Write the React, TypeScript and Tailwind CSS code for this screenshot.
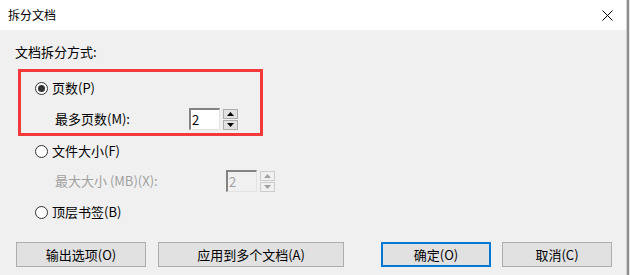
import React from 'react';

const font = { fontFamily: '"Noto Sans CJK SC", "Noto Sans", sans-serif' };

const Radio = ({ checked, label }: { checked?: boolean; label: string }) => (
  <div className="flex items-center h-[16px] gap-[4px]">
    <span className="w-[13px] h-[13px] rounded-full border border-[#333333] bg-white flex items-center justify-center">
      {checked && <span className="w-[7px] h-[7px] rounded-full bg-[#333333]" />}
    </span>
    <span className="leading-[16px]">{label}</span>
  </div>
);

const Spinner = ({ disabled }: { disabled?: boolean }) => {
  const arrow = disabled ? '#a0a0a0' : '#000000';
  const btn = disabled
    ? 'border-[#cccccc] bg-[#f0f0f0]'
    : 'border-[#adadad] bg-[#e1e1e1]';
  return (
    <div className="flex items-center gap-[3px]">
      <div
        className={`w-[31px] h-[22px] border-t-2 border-l-2 border-r border-b border-t-[#838383] border-l-[#838383] border-r-[#e3e3e3] border-b-[#e3e3e3] flex items-center pl-[1px] leading-none ${
          disabled ? 'bg-[#f0f0f0] text-[#a0a0a0]' : 'bg-white text-black'
        }`}
      >
        2
      </div>
      <div className="flex flex-col gap-[1px]">
        <div className={`w-[15px] h-[10px] border flex items-center justify-center ${btn}`}>
          <svg width="7" height="4" viewBox="0 0 7 4">
            <polygon points="3.5,0 7,4 0,4" fill={arrow} />
          </svg>
        </div>
        <div className={`w-[15px] h-[10px] border flex items-center justify-center ${btn}`}>
          <svg width="7" height="4" viewBox="0 0 7 4">
            <polygon points="0,0 7,0 3.5,4" fill={arrow} />
          </svg>
        </div>
      </div>
    </div>
  );
};

const Button = ({ label, w, primary }: { label: string; w: string; primary?: boolean }) => (
  <div
    className={`${w} h-[25px] bg-[#e1e1e1] flex items-center justify-center leading-none ${
      primary ? 'border-2 border-[#0078d7]' : 'border border-[#adadad]'
    }`}
  >
    {label}
  </div>
);

export default function App() {
  return (
    <div className="w-[630px] h-[275px] bg-[#f0f0f0] flex text-[13px] text-black overflow-hidden" style={font}>
      <div className="w-[626px] flex flex-col">
        {/* title bar */}
        <div className="h-[30px] bg-white flex items-center justify-between pl-[8px] pr-[13px] text-[12px]">
          <span>拆分文档</span>
          <svg width="11" height="11" viewBox="0 0 11 11">
            <path d="M0.5 0.5 L10.5 10.5 M10.5 0.5 L0.5 10.5" stroke="#000" strokeWidth="1" />
          </svg>
        </div>

        <div className="flex flex-col pt-[14px]">
          <div className="pl-[15px] leading-[16px]">文档拆分方式:</div>

          <div className="ml-[18px] mt-[9px] w-[245px] h-[67px] border-[3px] border-[#f23a3a] pl-[14px] pt-[8px] flex flex-col">
            <Radio checked label="页数(P)" />
            <div className="flex items-center mt-[12px]">
              <span className="w-[154px] pl-[20px] leading-[16px]">最多页数(M):</span>
              <Spinner />
            </div>
          </div>

          <div className="pl-[35px] mt-[7px]">
            <Radio label="文件大小(F)" />
          </div>
          <div className="flex items-center mt-[11px] pl-[55px] text-[#a0a0a0]">
            <span className="w-[171px] leading-[16px]">最大大小 (MB)(X):</span>
            <Spinner disabled />
          </div>
          <div className="pl-[35px] mt-[12px]">
            <Radio label="顶层书签(B)" />
          </div>

          <div className="flex items-center mt-[22px] pl-[16px]">
            <Button w="w-[130px]" label="输出选项(O)" />
            <div className="w-[12px]" />
            <Button w="w-[186px]" label="应用到多个文档(A)" />
            <div className="w-[37px]" />
            <Button w="w-[110px]" label="确定(O)" primary />
            <div className="w-[11px]" />
            <Button w="w-[110px]" label="取消(C)" />
          </div>
        </div>
      </div>
      <div className="w-[1px] bg-[#d4d4d4]" />
      <div className="w-[2px] bg-[#8e8e8e]" />
      <div className="w-[1px] bg-[#e5e5e5]" />
    </div>
  );
}
